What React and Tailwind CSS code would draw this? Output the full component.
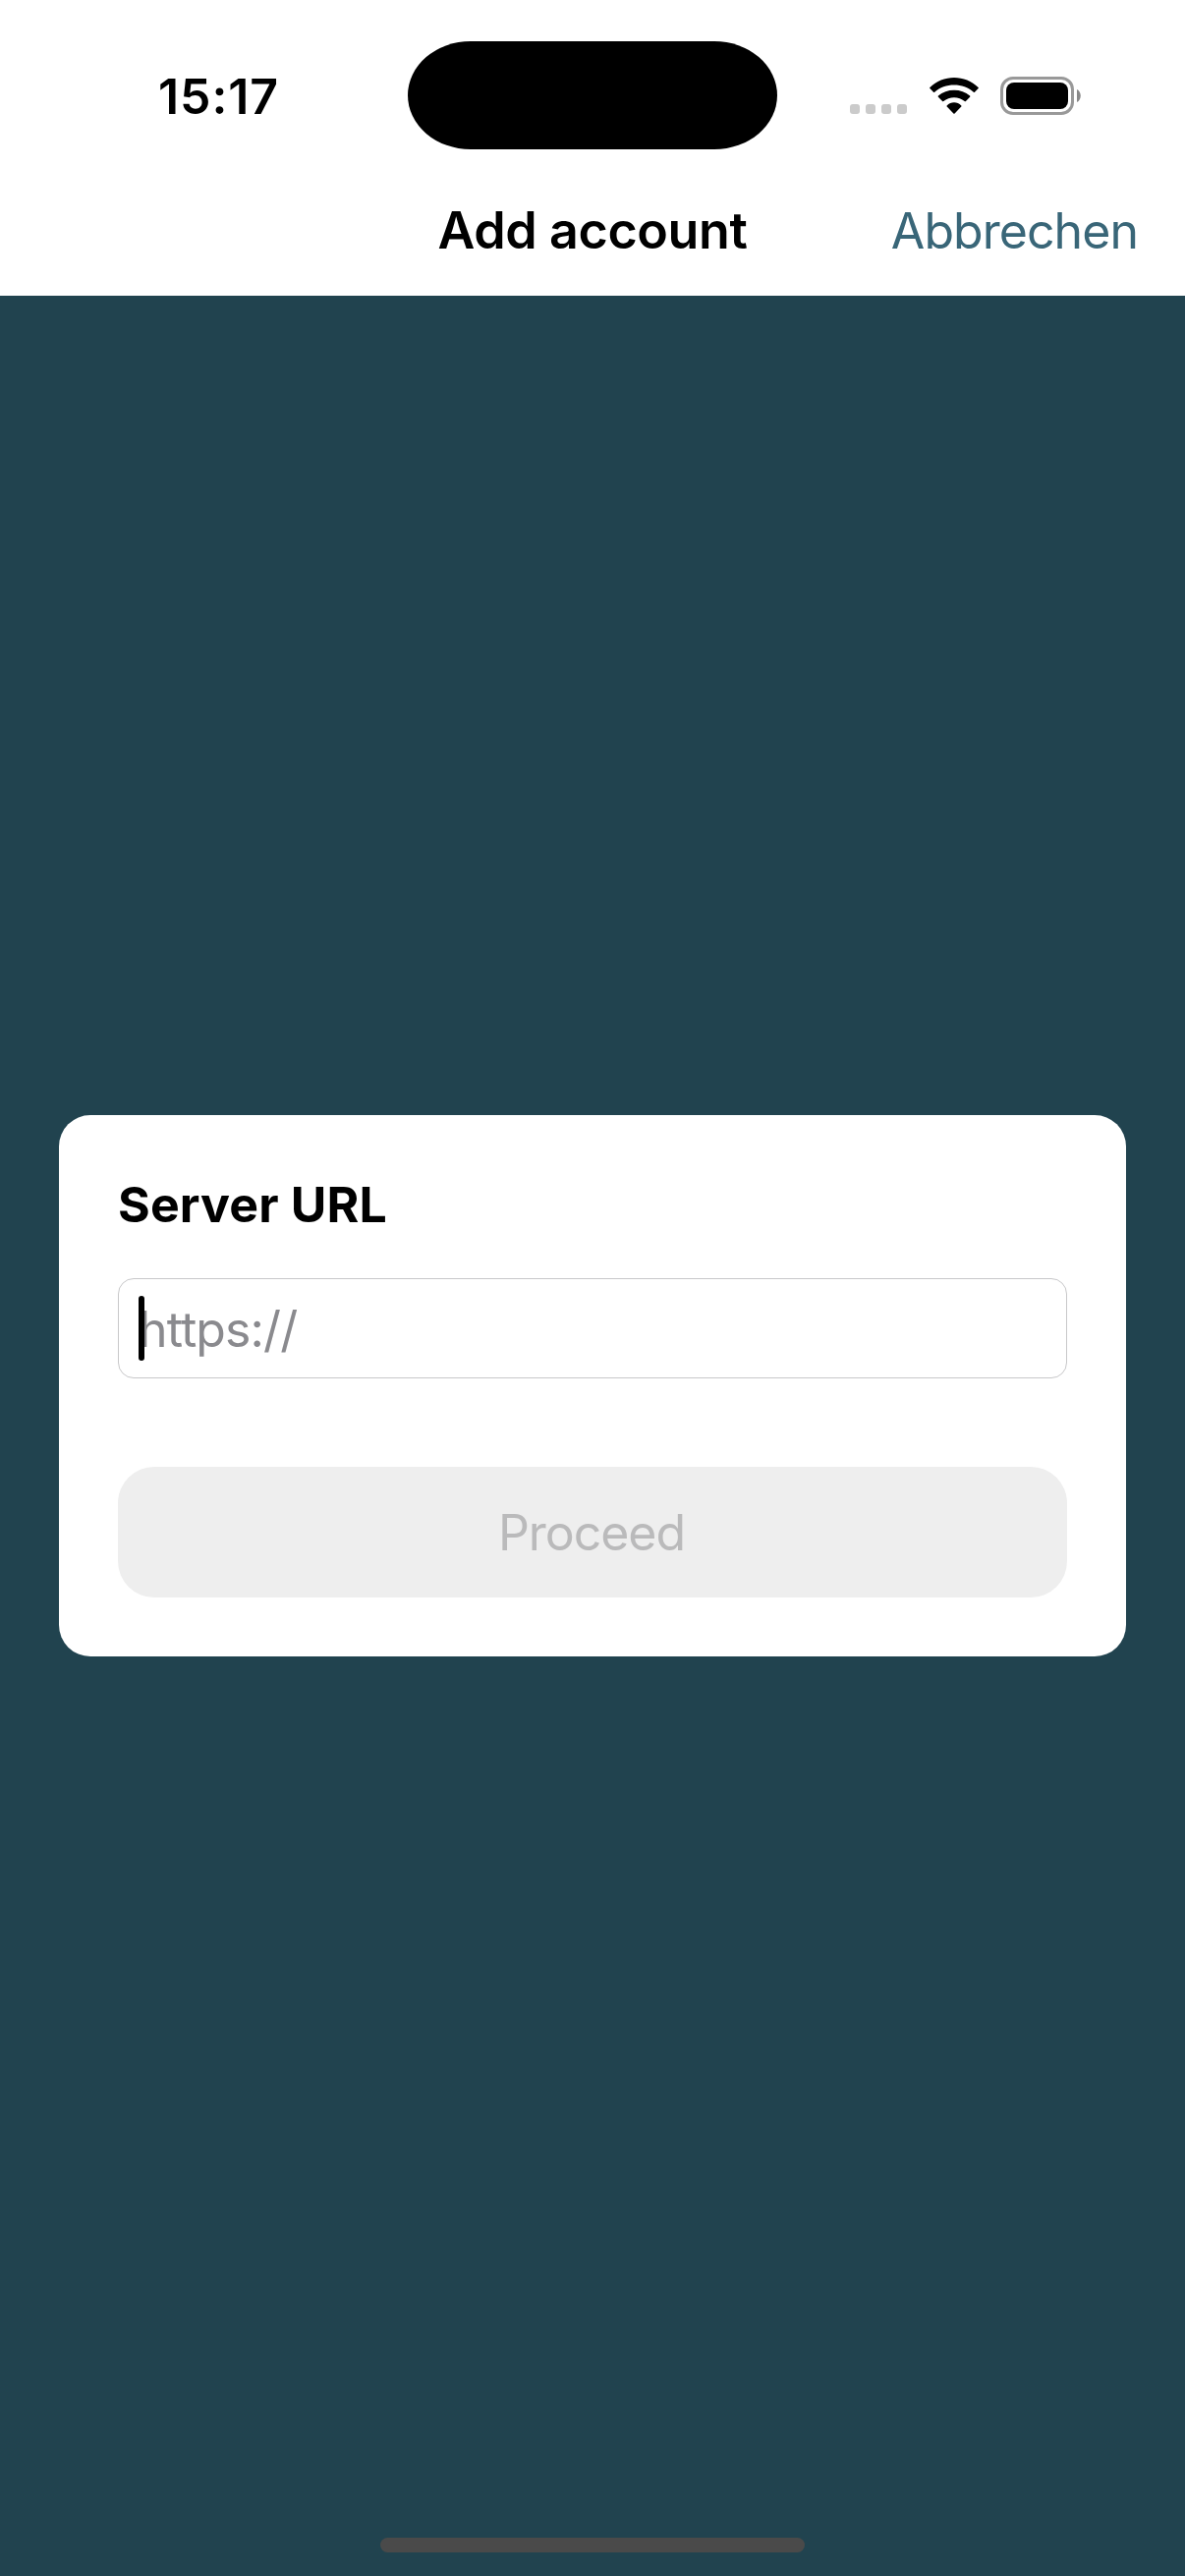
function CellularDots() {
  return (
    <div className="flex gap-[6px]">
      <span className="size-[10px] rounded-[3px] bg-[#cbcbcb]" />
      <span className="size-[10px] rounded-[3px] bg-[#cbcbcb]" />
      <span className="size-[10px] rounded-[3px] bg-[#cbcbcb]" />
      <span className="size-[10px] rounded-[3px] bg-[#cbcbcb]" />
    </div>
  );
}

function WifiIcon() {
  return (
    <svg className="h-[37px] w-[50px]" viewBox="0 0 50 37" fill="black">
      <path d="M.4 11.1Q-.2 10.5.4 9.900C7 3.600 15.800 0 25 0s18 3.600 24.600 9.900q.6.6 0 1.200L46 14.800q-.6.6-1.200 0C39.400 10 32.500 7.600 25 7.600S10.600 10 5.200 14.800q-.6.6-1.200 0Z" />
      <path d="M8.900 19.700q-.6-.6 0-1.200C13.300 14.700 19 12.700 25 12.700s11.700 2 16.100 5.800q.6.6 0 1.200l-4.200 4.300q-.6.6-1.200 0C32.700 21.500 29 20.200 25 20.200s-7.700 1.300-10.700 3.800q-.6.6-1.200 0Z" />
      <path d="M17.700 29.600q-.6-.6 0-1.200C19.700 26.400 22.300 25.200 25 25.200s5.300 1.200 7.300 3.200q.6.6 0 1.200L25.600 36.400q-.6.600-1.200 0Z" />
    </svg>
  );
}

function BatteryIcon() {
  return (
    <svg className="h-[39px] w-[82px]" viewBox="0 0 82 39">
      <rect x="1.500" y="1.500" width="72" height="36" rx="11.500" fill="none" stroke="#999" strokeWidth="3" />
      <rect x="6" y="6" width="63" height="27" rx="8" fill="black" />
      <path d="M78 13c5 2.200 5 10.800 0 13Z" fill="#888" />
    </svg>
  );
}

function StatusBar() {
  return (
    <div className="flex h-[170px] items-start">
      <div className="w-[415px] pt-[68px] pl-[161px] text-[50px] leading-[60px] font-semibold tracking-[0.9px] whitespace-nowrap">
        15:17
      </div>
      <div className="mt-[42px] h-[110px] w-[376px] rounded-[64px/55px] bg-black" />
      <div className="mt-[78px] ml-[74px] flex items-start">
        <div className="pt-[28px]">
          <CellularDots />
        </div>
        <div className="ml-[22.500px] pt-[1px]">
          <WifiIcon />
        </div>
        <div className="ml-[22.500px]">
          <BatteryIcon />
        </div>
      </div>
    </div>
  );
}

function NavigationBar() {
  return (
    <div className="grid h-[131px] grid-cols-[1fr_auto_1fr] items-start pt-[34px] leading-[62px] whitespace-nowrap">
      <span />
      <h1 className="text-[52px] leading-[62px] font-semibold tracking-[-0.4px]">Add account</h1>
      <button className="justify-self-end pr-[48px] text-[50px] leading-[62px] tracking-[-0.95px] text-[#396678]">
        Abbrechen
      </button>
    </div>
  );
}

export default function App() {
  return (
    <div className="flex h-[2622px] w-[1206px] flex-col overflow-hidden bg-[#21434f] font-['Inter',sans-serif] text-black">
      <header className="h-[301px] shrink-0 bg-white">
        <StatusBar />
        <NavigationBar />
      </header>
      <main className="flex-1 px-[60px] pt-[834px]">
        <section className="h-[551px] rounded-[32px] bg-white px-[60px] pt-[60px]">
          <h2 className="h-[106px] text-[50px] leading-[62px] font-bold tracking-[0.15px] whitespace-nowrap">
            Server URL
          </h2>
          <div className="relative flex h-[102px] items-center rounded-[16px] border border-[#c8c8ca] pl-[20px]">
            <span className="pt-[2px] text-[50px] leading-[60px] tracking-[-0.9px] text-[#8a8a8e]">https://</span>
            <span className="absolute top-[17px] left-[20px] h-[66px] w-[6px] rounded-[3px] bg-black" />
          </div>
          <button className="mt-[90px] flex h-[133px] w-full items-center justify-center rounded-[37px] bg-[#eeeeee] pt-[1px] pr-[2px] text-[50px] tracking-[-1.05px] text-[#bababb]">
            Proceed
          </button>
        </section>
      </main>
      <div className="mx-auto mb-[24px] h-[15px] w-[432px] rounded-full bg-[#4a4a4a]" />
    </div>
  );
}
